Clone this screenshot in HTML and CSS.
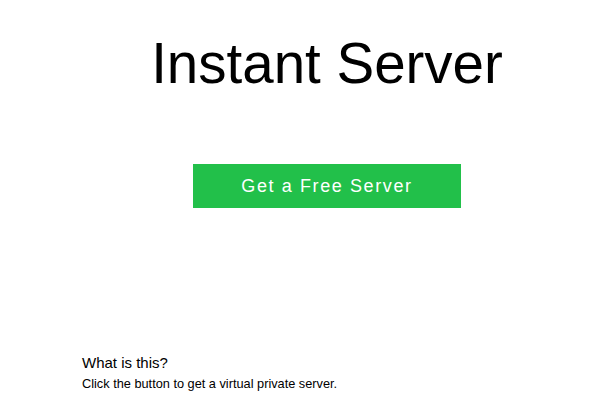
FILE: index.html
```html
<!DOCTYPE html>
<html lang="en">
<head>
  <meta charset="UTF-8">
  <title>Instant Server</title>
  <link rel="stylesheet" href="styles.css">
</head>
<body>
  <div class="page">
    <!-- Hero: title and the call to action -->
    <header class="hero">
      <h1 class="title">Instant Server</h1>
      <button class="cta" type="button">Get a Free Server</button>
    </header>

    <!-- Short explanation at the bottom -->
    <section class="about">
      <h2 class="about-title">What is this?</h2>
      <p class="about-text">Click the button to get a virtual private server.</p>
    </section>
  </div>
</body>
</html>
```

FILE: styles.css
```css
/* Basic reset */
html, body {
  margin: 0;
  padding: 0;
  background: #fff;
  color: #000;
  font-family: "Liberation Sans", Arial, sans-serif;
}
.page {
  padding: 0 25px 0 82px;
}
/* Hero block */
.hero {
  display: flex;
  flex-direction: column;
  align-items: center;
}
.title {
  margin: 32px 0 0;
  font-size: 56.5px;
  font-weight: normal;
  line-height: 64px;
}
.cta {
  margin-top: 68px;
  width: 268px;
  height: 44px;
  border: 0;
  background: #22c04a;
  color: #fff;
  font-family: inherit;
  font-size: 18px;
  letter-spacing: 1.6px;
  cursor: pointer;
}
/* About block */
.about {
  margin-top: 146px;
}
.about-title {
  margin: 0;
  font-size: 15px;
  font-weight: normal;
  line-height: 18px;
}
.about-text {
  margin: 4px 0 0;
  font-size: 12.75px;
  line-height: 15px;
}
```
